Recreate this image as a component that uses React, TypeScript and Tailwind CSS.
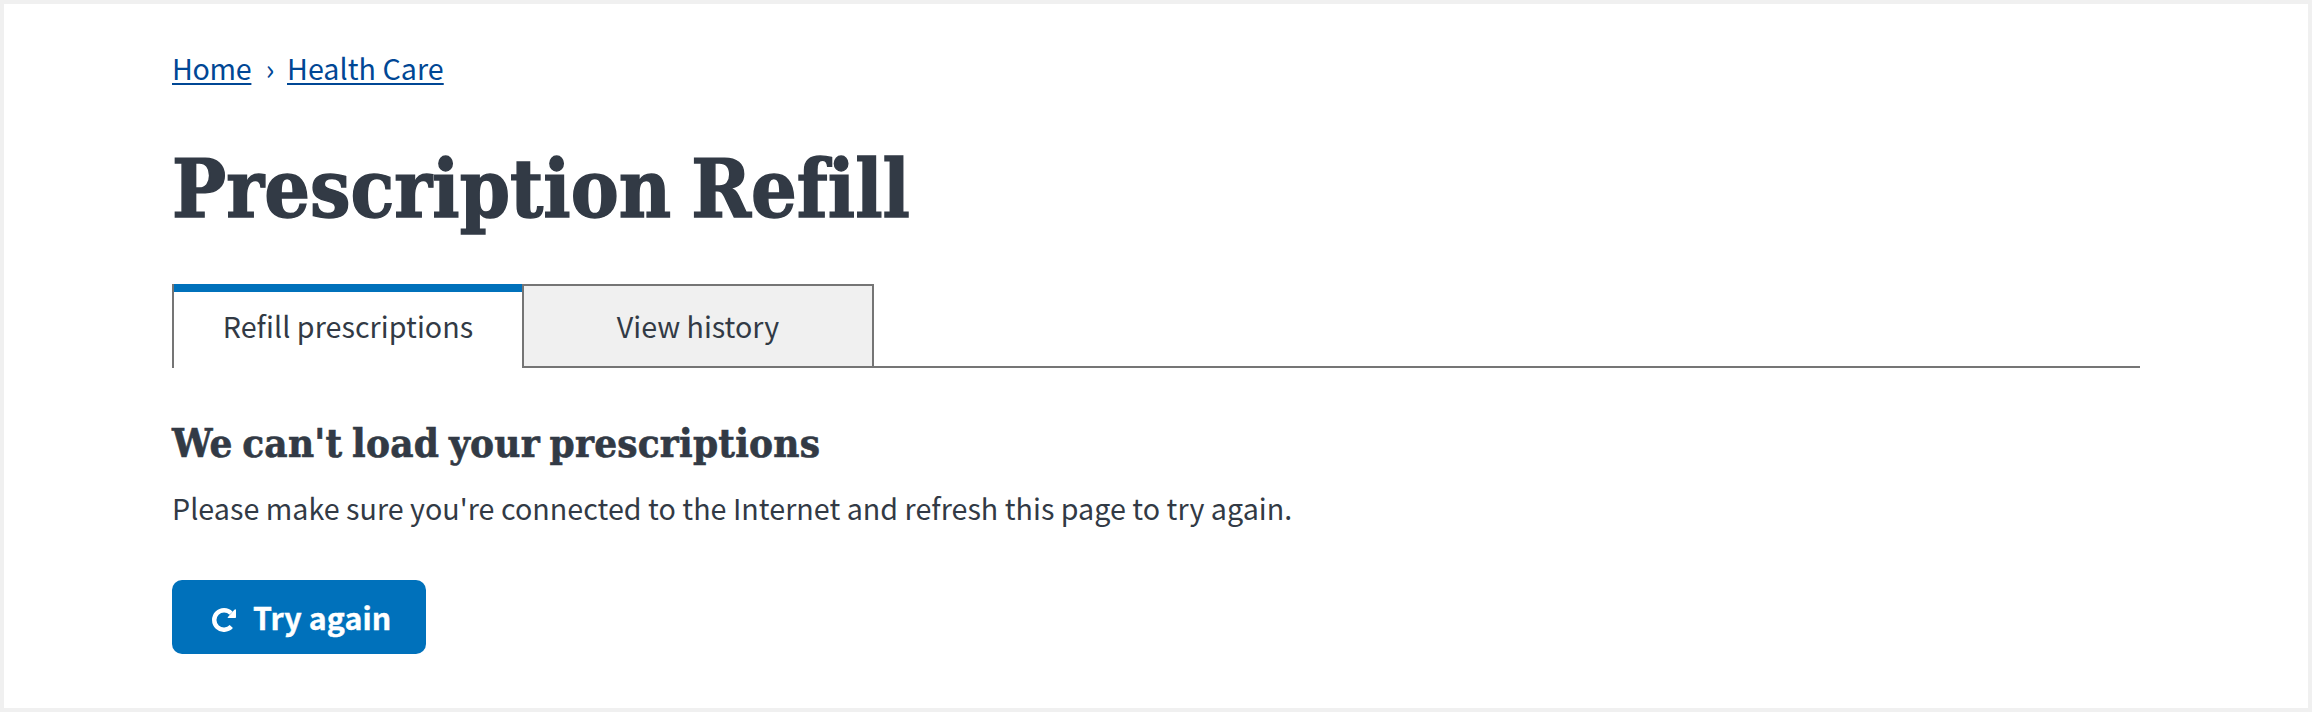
import React from "react";

const sans = "font-['Noto_Sans_CJK_SC',sans-serif]";
const slab = "font-['DejaVu_Serif_Condensed','DejaVu_Serif',serif]";

function Breadcrumbs() {
  return (
    <nav className="flex h-10 items-start text-[28.65px] leading-10 text-[#004795]">
      <a className="w-[79px] tracking-[-0.3px] whitespace-nowrap underline decoration-2 underline-offset-[3px] [text-decoration-skip-ink:none]">Home</a>
      <span className="w-9 pl-[2px] text-center">›</span>
      <a className="tracking-[0.05px] underline decoration-2 underline-offset-[3px] [text-decoration-skip-ink:none]">Health Care</a>
    </nav>
  );
}

function Tabs() {
  return (
    <div className="mt-[47px] flex h-21 text-center text-[28.65px] leading-10">
      <div className="flex w-[350px] border-l-2 border-l-[#757575]">
        <div className="flex w-full items-center justify-center border-t-8 border-[#0071bb] pb-2 tracking-[0.07px]">Refill prescriptions</div>
      </div>
      <div className="flex w-88 items-center justify-center border-2 border-[#757575] bg-[#f0f0f0]">View history</div>
      <div className="flex-1 border-b-2 border-[#757575]" />
    </div>
  );
}

function RefreshIcon() {
  return (
    <svg className="mt-[6px] h-6 w-6" viewBox="0 0 24 24" fill="none">
      <path d="M19.3 18.6A9.8 9.8 0 1 1 19.1 5.2" stroke="white" strokeWidth="4.4" />
      <path d="M24 2V9.2Q24 10 23.2 10H16.4Q15 10 15.9 8.9L22.4 1.7Q24 0.6 24 2Z" fill="white" />
    </svg>
  );
}

export default function App() {
  return (
    <main className={`h-[712px] w-full border-4 border-[#f0f0f0] bg-white px-42 pt-11 text-[#323a45] ${sans}`}>
      <Breadcrumbs />
      <h1 className={`mt-[53px] text-[80px] leading-24 font-bold tracking-[0.03px] [word-spacing:-5px] [font-variant-ligatures:none] [-webkit-text-stroke:1.4px_#323a45] ${slab}`}>
        Prescription Refill
      </h1>
      <Tabs />
      <h3 className={`mt-[51px] text-[40px] leading-12 font-bold tracking-[0.22px] [word-spacing:-3px] [-webkit-text-stroke:0.6px_#323a45] ${slab}`}>
        We can't load your prescriptions
      </h3>
      <p className="mt-[21px] text-[28.65px] leading-10 tracking-[0.035px]">
        Please make sure you're connected to the Internet and refresh this page to try again.
      </p>
      <button className="mt-13 flex h-[74px] w-[254px] items-center rounded-[10px] bg-[#0071bb] pl-10 text-[30.35px] leading-10 font-bold text-white">
        <RefreshIcon />
        <span className="ml-[17px] tracking-[0.1px] [-webkit-text-stroke:0.4px_white]">Try again</span>
      </button>
    </main>
  );
}
